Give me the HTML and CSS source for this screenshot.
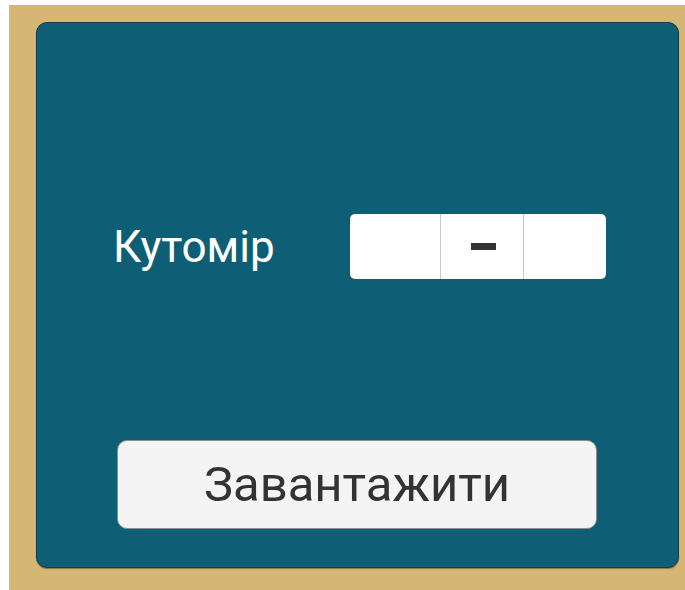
FILE: index.html
```html
<!DOCTYPE html>
<html lang="uk">
<head>
<meta charset="utf-8">
<title>Кутомір</title>
<link rel="stylesheet" href="styles.css">
</head>
<body>
<div class="frame">
  <div class="panel">
    <div class="row">
      <span class="label">Кутомір</span>
      <div class="spinner">
        <div class="cell cell-wide"></div>
        <div class="cell"><span class="dash"></span></div>
        <div class="cell"></div>
      </div>
    </div>
    <button class="load">Завантажити</button>
  </div>
</div>
</body>
</html>
```

FILE: styles.css
```css
html, body {
  margin: 0;
  padding: 0;
  background: #ffffff;
  height: 100%;
}

body {
  font-family: Roboto, "Liberation Sans", sans-serif;
}

.frame {
  margin: 5px 0 0 9px;
  height: 585px;
  background: #d5b675;
  box-sizing: border-box;
  padding: 17px 6px 22px 27px;
  display: flex;
}

.panel {
  flex: 1;
  background: #0e5f75;
  border: 1px solid #163c47;
  border-radius: 11px;
  box-shadow: 0 1px 1px rgba(0, 0, 0, 0.35);
  display: flex;
  flex-direction: column;
  align-items: flex-start;
  padding: 191px 0 0 80px;
}

.row {
  display: flex;
  align-items: center;
  height: 65px;
}

.label {
  color: #ffffff;
  font-size: 44px;
  width: 237px;
  margin-left: -4px;
}

.spinner {
  display: flex;
  height: 65px;
  background: #ffffff;
  border-radius: 5px;
}

.cell {
  width: 82px;
  display: flex;
  align-items: center;
  justify-content: center;
  border-left: 1px solid #c8c8c8;
}

.cell-wide {
  width: 90px;
  border-left: none;
}

.dash {
  width: 25px;
  height: 7px;
  background: #333333;
  margin-left: 2px;
}

.load {
  margin-top: 161px;
  width: 480px;
  height: 89px;
  background: #f4f4f4;
  border: 1px solid #8d8d8d;
  border-radius: 10px;
  font-family: Roboto, "Liberation Sans", sans-serif;
  font-size: 49px;
  color: #333333;
  padding: 0;
}
```
